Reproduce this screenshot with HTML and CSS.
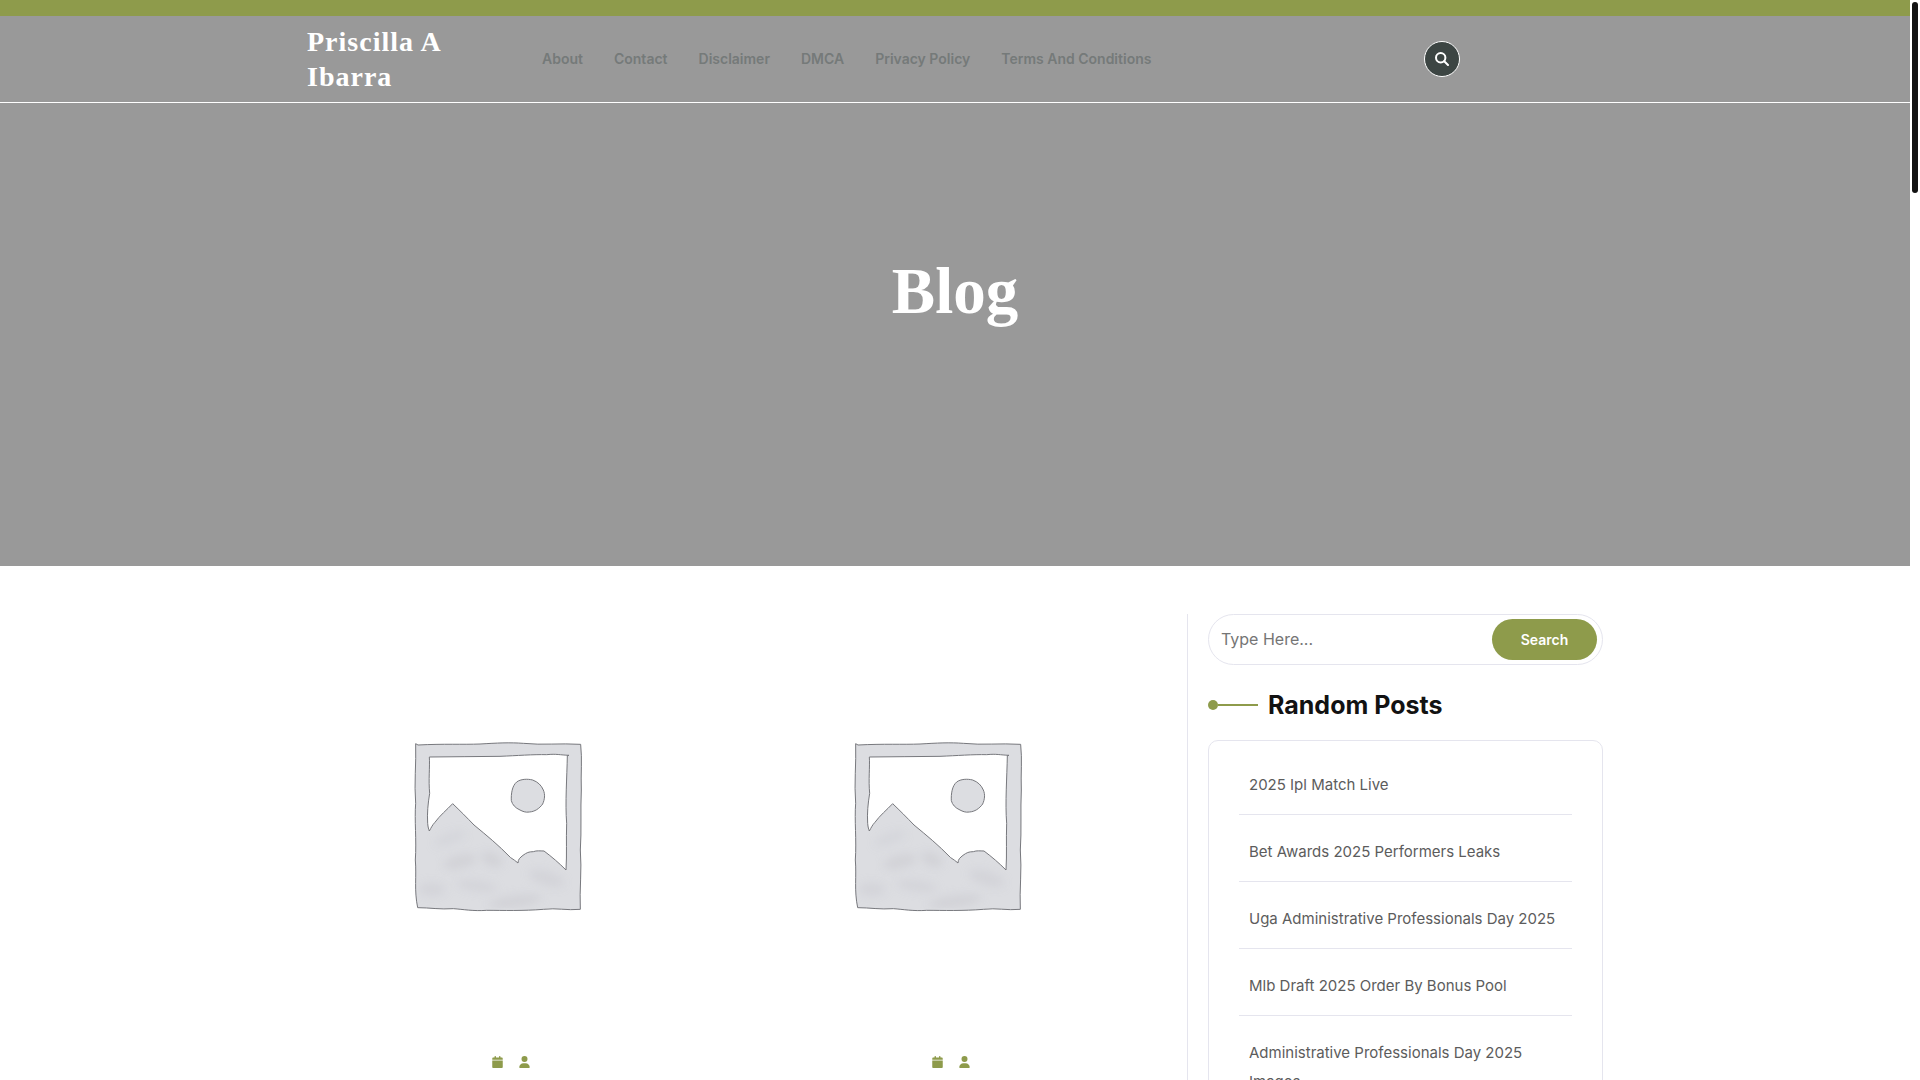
FILE: index.html
```html
<!DOCTYPE html>
<html lang="en">
<head>
  <meta charset="UTF-8">
  <title>Blog - Priscilla A Ibarra</title>
  <meta name="viewport" content="width=device-width, initial-scale=1">
  <link rel="stylesheet" href="styles.css">
</head>
<body>
  <!-- Shared drawings -->
  <svg class="sprite" aria-hidden="true">
    <defs>
      <filter id="soft" x="-20%" y="-20%" width="140%" height="140%">
        <feGaussianBlur stdDeviation="12"/>
      </filter>
      <clipPath id="ground">
        <path d="M50 305 L88 303 L158 221 L222 285 L352 400 Q370 362 432 363 L498 420 L540 420 L540 538 L54 533 Z"/>
      </clipPath>
    </defs>
    <symbol id="placeholder" viewBox="0 0 600 570">
      <path fill="#dcdde1" fill-rule="evenodd" stroke="#77787d" stroke-width="3" stroke-linejoin="round" d="M47 41 L54 45 C130 41 190 44 240 42 C290 39 330 37 370 40 C430 46 480 39 542 43 C547 90 542 130 544 180 C541 240 545 300 541 360 C546 420 538 480 541 538 C500 542 470 533 430 538 C370 543 310 541 260 541 C220 544 190 538 160 536 C120 539 90 533 53 533 C42 480 50 440 46 390 C50 330 43 270 47 220 C42 160 49 100 47 41 Z
        M88 81 C90 110 85 150 89 190 C84 220 81 250 83 280 C84 292 86 298 88 303 C94 292 98 284 104 278 C120 256 140 240 158 221 C180 242 200 262 222 285 C262 318 295 345 332 383 C340 388 347 393 354 399 C354 388 360 383 369 376 C380 368 386 365 400 365 C410 361 420 363 432 363 C456 381 477 399 498 420 C501 370 498 330 500 280 C495 220 501 140 502 77 L507 76 C480 75 470 71 440 74 C400 73 350 77 300 79 C230 81 160 79 88 81 Z"/>
      <g clip-path="url(#ground)">
        <g filter="url(#soft)" fill="#cbccd1">
          <ellipse cx="150" cy="325" rx="50" ry="16" opacity=".4" transform="rotate(-20 150 325)"/>
          <ellipse cx="180" cy="395" rx="50" ry="20" opacity=".6" transform="rotate(-14 180 395)"/>
          <ellipse cx="275" cy="388" rx="34" ry="20" opacity=".6" transform="rotate(25 275 388)"/>
          <ellipse cx="95" cy="478" rx="40" ry="20" opacity=".5"/>
          <ellipse cx="230" cy="468" rx="60" ry="16" opacity=".5" transform="rotate(8 230 468)"/>
          <ellipse cx="345" cy="514" rx="80" ry="18" opacity=".6" transform="rotate(-8 345 514)"/>
          <ellipse cx="440" cy="445" rx="55" ry="22" opacity=".5" transform="rotate(18 440 445)"/>
        </g>
      </g>
      <path fill="#dcdde1" stroke="#77787d" stroke-width="3" stroke-linejoin="round" d="M350 156 C362 147 382 146 398 150 C414 156 424 166 430 180 C436 194 434 208 428 222 C418 236 404 245 388 246 C376 248 368 244 360 240 C346 234 337 224 334 212 C333 192 336 168 350 156 Z"/>
    </symbol>
    <symbol id="calendar" viewBox="0 0 448 512">
      <path d="M96 32V64H48C21.500 64 0 85.500 0 112V160H448V112C448 85.500 426.500 64 400 64H352V32C352 14.300 337.700 0 320 0S288 14.300 288 32V64H160V32C160 14.300 145.700 0 128 0S96 14.300 96 32ZM448 192H0V464C0 490.500 21.500 512 48 512H400C426.500 512 448 490.500 448 464V192Z"/>
    </symbol>
    <symbol id="user" viewBox="0 0 448 512">
      <path d="M224 256A128 128 0 1 0 224 0A128 128 0 1 0 224 256ZM178.300 304C79.800 304 0 383.800 0 482.300C0 498.700 13.300 512 29.700 512H418.300C434.700 512 448 498.700 448 482.300C448 383.800 368.200 304 269.700 304H178.300Z"/>
    </symbol>
  </svg>

  <div class="page">
    <div class="topbar"></div>
    <header class="header">
      <div class="container header-row">
        <div class="logo"><a href="#">Priscilla A Ibarra</a></div>
        <nav class="menu">
          <a href="#">About</a>
          <a href="#">Contact</a>
          <a href="#">Disclaimer</a>
          <a href="#">DMCA</a>
          <a href="#">Privacy Policy</a>
          <a href="#">Terms And Conditions</a>
        </nav>
        <div class="header-search">
          <button type="button" class="search-toggle" aria-label="Open search">
            <svg viewBox="0 0 14 14" width="14" height="14" fill="none" stroke="#fff" stroke-width="2" stroke-linecap="round">
              <circle cx="5.700" cy="5.700" r="4.700"/>
              <path d="M9.200 9.200 L13 13"/>
            </svg>
          </button>
        </div>
      </div>
    </header>

    <section class="banner">
      <h1>Blog</h1>
    </section>

    <main class="container content">
      <div class="posts">
        <article class="post">
          <a class="post-thumb" href="#" aria-label="Read post"><svg><use href="#placeholder"/></svg></a>
          <div class="post-meta">
            <span><svg><use href="#calendar"/></svg></span>
            <span><svg><use href="#user"/></svg></span>
          </div>
        </article>
        <article class="post">
          <a class="post-thumb" href="#" aria-label="Read post"><svg><use href="#placeholder"/></svg></a>
          <div class="post-meta">
            <span><svg><use href="#calendar"/></svg></span>
            <span><svg><use href="#user"/></svg></span>
          </div>
        </article>
      </div>

      <aside class="sidebar">
        <form class="search-form">
          <input type="search" placeholder="Type Here..." aria-label="Search the blog">
          <button type="submit">Search</button>
        </form>
        <h2 class="widget-title">Random Posts</h2>
        <ul class="widget-list">
          <li><a href="#">2025 Ipl Match Live</a></li>
          <li><a href="#">Bet Awards 2025 Performers Leaks</a></li>
          <li><a href="#">Uga Administrative Professionals Day 2025</a></li>
          <li><a href="#">Mlb Draft 2025 Order By Bonus Pool</a></li>
          <li><a href="#">Administrative Professionals Day 2025 Images</a></li>
        </ul>
      </aside>
    </main>
  </div>
  <div class="scroll-rail"><div class="scroll-thumb"></div></div>
</body>
</html>
```
FILE: styles.css
```css
:root {
  --green: #8e9b4b;
  --dark: #3c4543;
  --gray: #999;
  --border: #e5e5ee;
  --rail: 10px;
}
* {
  box-sizing: border-box;
}
body {
  margin: 0;
  font-family: Inter, "Liberation Sans", sans-serif;
  font-size: 15px;
  color: #5c5c5c;
  background: #fff;
}
a {
  color: inherit;
  text-decoration: none;
}
.sprite {
  position: absolute;
  width: 0;
  height: 0;
}
.page {
  height: 100vh;
  margin-right: var(--rail);
  overflow-y: auto;
  scrollbar-width: none;
}
.container {
  width: 100%;
  max-width: 1320px;
  margin: 0 auto;
  padding: 0 12px;
}

/* Header */
.topbar {
  height: 16px;
  background: var(--green);
}
.header {
  background: var(--gray);
  border-bottom: 1px solid #fff;
}
.header-row {
  display: flex;
  align-items: center;
  padding: 8px 12px;
}
.logo {
  flex: 0 0 220px;
  padding-right: 24px;
  font-family: "Liberation Serif", "Times New Roman", serif;
  font-size: 28px;
  font-weight: 700;
  line-height: 35px;
  letter-spacing: 1px;
  color: #fff;
}
.menu {
  display: flex;
  flex: 0 1 880px;
  flex-wrap: wrap;
  gap: 1px;
}
.menu a {
  padding: 0 15px;
  font-size: 14px;
  font-weight: 600;
  line-height: 24px;
  color: #757a79;
}
.header-search {
  padding-left: 17px;
}
.search-toggle {
  display: flex;
  align-items: center;
  justify-content: center;
  width: 36px;
  height: 36px;
  padding: 0;
  border: 1px solid #fff;
  border-radius: 50%;
  background: var(--dark);
  cursor: pointer;
}

/* Banner */
.banner {
  padding: 149px 12px 236px;
  background: var(--gray);
  text-align: center;
}
.banner h1 {
  margin: 0;
  font-family: "Liberation Serif", "Times New Roman", serif;
  font-size: 65px;
  line-height: 78px;
  color: #fff;
}

/* Blog */
.content {
  display: flex;
  gap: 24px;
  padding-top: 48px;
}
.posts {
  display: grid;
  flex: 2 1 0;
  grid-template-columns: 1fr 1fr;
  gap: 24px;
}
.post-thumb {
  display: block;
  padding: 116px 93px 128px;
}
.post-thumb svg {
  display: block;
  width: 200px;
  height: 190px;
}
.post-meta {
  display: flex;
  align-items: center;
  justify-content: center;
  gap: 8px;
  height: 28px;
}
.post-meta span {
  padding-right: 8px;
}
.post-meta svg {
  display: block;
  width: 11px;
  height: 12px;
  fill: var(--green);
}

/* Sidebar */
.sidebar {
  flex: 0 0 416px;
  padding-left: 20px;
  border-left: 1px solid var(--border);
}
.search-form {
  display: flex;
  padding: 4px 5px 4px 12px;
  border: 1px solid var(--border);
  border-radius: 26px;
}
.search-form input {
  flex: 1;
  min-width: 0;
  padding: 0 0 2px;
  border: none;
  outline: none;
  background: none;
  font-family: inherit;
  font-size: 16px;
}
.search-form input::placeholder {
  color: #757575;
}
.search-form button {
  width: 105px;
  height: 41px;
  border: none;
  border-radius: 21px;
  background: var(--green);
  color: #fff;
  font-family: inherit;
  font-size: 14px;
  font-weight: 600;
  cursor: pointer;
}
.widget-title {
  display: flex;
  align-items: center;
  margin: 25px 0 20px;
  font-size: 25px;
  font-weight: 700;
  line-height: 30px;
  color: #121212;
}
/* dot and line in front of the title */
.widget-title::before {
  content: "";
  order: -2;
  width: 10px;
  height: 10px;
  border-radius: 50%;
  background: var(--green);
}
.widget-title::after {
  content: "";
  order: -1;
  width: 40px;
  height: 2px;
  margin-right: 10px;
  background: var(--green);
}
.widget-list {
  margin: 0;
  padding: 7px 30px;
  border: 1px solid var(--border);
  border-radius: 10px;
  list-style: none;
}
.widget-list li {
  padding: 22px 10px 15px;
  border-bottom: 1px solid var(--border);
  line-height: 29px;
}
.widget-list li:last-child {
  border-bottom: none;
}

/* Scrollbar */
.scroll-rail {
  position: fixed;
  top: 0;
  right: 0;
  bottom: 0;
  width: var(--rail);
  padding: 2px;
}
.scroll-thumb {
  height: 191px;
  border-radius: 3px;
  background: #121212;
}
```
